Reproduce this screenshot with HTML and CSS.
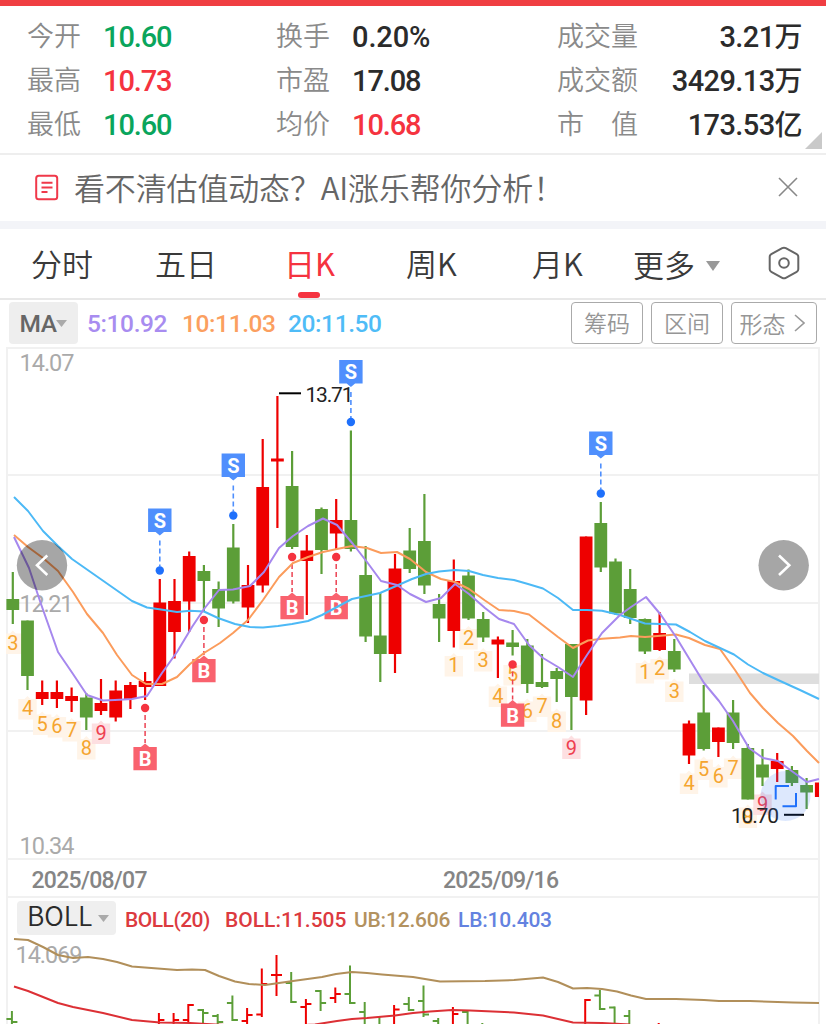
FILE: index.html
```html
<!DOCTYPE html>
<html lang="zh-CN">
<head>
    <meta charset="UTF-8">
    <meta name="viewport" content="width=device-width, initial-scale=1.0">
    <title>日K</title>
    <link rel="stylesheet" href="styles.css">
</head>
<body>
    <div class="top-line"></div>
    <div class="quote">
      <div class="col col-a">
        <div class="row"><span class="label">今开</span><b class="down">10.60</b></div>
        <div class="row"><span class="label">最高</span><b class="up">10.73</b></div>
        <div class="row"><span class="label">最低</span><b class="down">10.60</b></div>
      </div>
      <div class="col col-b">
        <div class="row"><span class="label">换手</span><b class="rate">0.20%</b></div>
        <div class="row"><span class="label">市盈</span><b>17.08</b></div>
        <div class="row"><span class="label">均价</span><b class="up">10.68</b></div>
      </div>
      <div class="col col-c">
        <div class="row"><span class="label">成交量</span><b>3.21<i>万</i></b></div>
        <div class="row"><span class="label">成交额</span><b>3429.13<i>万</i></b></div>
        <div class="row"><span class="label">市　值</span><b>173.53<i>亿</i></b></div>
      </div>
      <div class="corner"></div>
    </div>

    <div class="notice">
      <svg class="doc" width="24" height="27" viewBox="0 0 24 27">
        <rect x="1.2" y="1.7" width="21" height="23.6" rx="2.5"/>
        <path d="M6.5 8.7H17.5M6.5 13.4H17.5M6.5 18H12.5"/>
      </svg>
      <span class="notice-text">看不清估值动态？AI涨乐帮你分析！</span>
      <svg class="close" width="20" height="20" viewBox="0 0 20 20"><path d="M1 1L19 19M19 1L1 19"/></svg>
    </div>

    <div class="tabs">
      <div class="tab">分时</div>
      <div class="tab">五日</div>
      <div class="tab active">日K</div>
      <div class="tab">周K</div>
      <div class="tab">月K</div>
      <div class="tab more">更多<svg width="16" height="12" viewBox="0 0 16 12"><path d="M1 1H15L8 11Z"/></svg></div>
      <svg class="setting" width="32" height="34" viewBox="0 0 32 34">
        <path d="M14.2 2.2Q16 1.2 17.8 2.2L28.7 8.1Q30.3 9 30.3 10.8V23.2Q30.3 25 28.7 25.9L17.8 31.8Q16 32.8 14.2 31.8L3.3 25.9Q1.7 25 1.7 23.2V10.8Q1.7 9 3.3 8.1Z"/>
        <circle cx="16" cy="17" r="4.8"/>
      </svg>
    </div>

    <div class="ma-bar">
      <div class="pick">MA<svg width="11" height="7" viewBox="0 0 11 7"><path d="M0 0H11L5.5 7Z"/></svg></div>
      <span class="ma ma5">5:10.92</span>
      <span class="ma ma10">10:11.03</span>
      <span class="ma ma20">20:11.50</span>
      <div class="btns">
        <div class="btn">筹码</div>
        <div class="btn">区间</div>
        <div class="btn wide">形态<svg width="11" height="18" viewBox="0 0 11 18"><path d="M1 1L10 9L1 17"/></svg></div>
      </div>
    </div>

    <svg class="chart" id="kline" width="826" height="551" viewBox="0 347 826 551"></svg>

    <div class="boll-bar">
      <div class="pick-boll">BOLL<svg width="11" height="7" viewBox="0 0 11 7"><path d="M0 0H11L5.5 7Z"/></svg></div>
      <span class="bl b1">BOLL(20)</span>
      <span class="bl b2">BOLL:11.505</span>
      <span class="bl b3">UB:12.606</span>
      <span class="bl b4">LB:10.403</span>
    </div>

    <svg class="chart" id="boll" width="826" height="89" viewBox="0 935 826 89"></svg>

    <script src="chart.js"></script>
</body>
</html>
```
FILE: styles.css
```css
* {
  box-sizing: border-box;
}

body {
  margin: 0;
  width: 826px;
  height: 1024px;
  overflow: hidden;
  background-color: #fff;
  color: #2b2b2b;
  font-family: Roboto, "Noto Sans CJK SC", sans-serif;
}

svg {
  display: block;
  fill: none;
}

.top-line {
  height: 6px;
  background-color: #f03e42;
}

/* quote */
.quote {
  position: relative;
  display: flex;
  height: 149px;
  padding: 8px 24px 0 27px;
  border-bottom: 2px solid #eee;
}

.col-a { width: 249px; }
.col-b { width: 281px; }
.col-c { width: 245px; }

.row {
  display: flex;
  height: 44px;
  align-items: center;
}

.label {
  width: 76px;
  font-family: "Noto Sans CJK SC", sans-serif;
  font-size: 27px;
  font-weight: 350;
  line-height: 42px;
  padding-bottom: 2px;
  color: #8a8a8a;
  white-space: nowrap;
}

.row b {
  font-size: 29px;
  font-weight: 500;
  line-height: 44px;
  letter-spacing: -1.1px;
  padding-top: 2px;
}

.row .rate {
  letter-spacing: -0.1px;
}

.row i {
  font-family: "Noto Sans CJK SC", sans-serif;
  font-style: normal;
  font-size: 28px;
  line-height: 1;
}

.col-c .row {
  justify-content: space-between;
}

.col-c .row b {
  letter-spacing: -0.6px;
}

.col-c .label {
  width: auto;
}

.up { color: #f5333f; }
.down { color: #0aa55c; }

.corner {
  position: absolute;
  right: 4px;
  bottom: 4px;
  border-left: 17px solid transparent;
  border-bottom: 17px solid #c9c9c9;
}

/* notice */
.notice {
  display: flex;
  align-items: center;
  height: 66px;
  padding: 0 28px 2px 35px;
}

.doc {
  stroke: #f0394a;
  stroke-width: 2;
}

.notice-text {
  flex: 1;
  margin-left: 15px;
  padding-bottom: 1px;
  font-family: "Noto Sans CJK SC", sans-serif;
  font-size: 31px;
  font-weight: 350;
  letter-spacing: -0.15px;
  color: #666;
}

.close {
  stroke: #888;
  stroke-width: 1.6;
}

/* tabs */
.tabs {
  display: flex;
  position: relative;
  height: 79px;
  border-top: 8px solid #f3f4f8;
  border-bottom: 2px solid #e8e8e8;
  padding-left: 31px;
}

.tab {
  width: 124px;
  height: 69px;
  line-height: 67px;
  font-family: "Noto Sans CJK SC", sans-serif;
  font-size: 31px;
  font-weight: 350;
  color: #3a3a3a;
}

.tab.active {
  position: relative;
  padding-left: 5px;
  color: #f5333f;
  font-weight: 400;
}

.tab.active::after {
  content: "";
  position: absolute;
  left: 19px;
  bottom: 0;
  width: 22px;
  height: 6px;
  border-radius: 3px;
  background-color: #f5333f;
}

.tab:nth-child(4) { padding-left: 3px; }
.tab:nth-child(5) { padding-left: 5px; width: 106px; }

.tab.more {
  display: flex;
  align-items: center;
  width: 135px;
}

.more svg {
  margin-top: 4px;
  margin-left: 10px;
  fill: #999;
}

.setting {
  margin-top: 17px;
  stroke: #666;
  stroke-width: 2;
}

/* ma */
.ma-bar {
  display: flex;
  height: 47px;
  padding: 2px 9px 3px;
}

.pick {
  display: flex;
  align-items: center;
  justify-content: center;
  width: 69px;
  border-radius: 4px;
  background-color: #eee;
  font-size: 24.5px;
  font-weight: 500;
  letter-spacing: -0.5px;
  color: #666;
}

.pick svg, .pick-boll svg {
  fill: #aaa;
}

.ma {
  line-height: 43px;
  font-size: 24.5px;
  font-weight: 500;
  letter-spacing: -0.4px;
}

.ma5 { width: 95px; margin-left: 9px; color: #a88cf0; }
.ma10 { width: 106px; color: #fb9f60; }
.ma20 { color: #4fbcf7; }

.btns {
  display: flex;
  gap: 8px;
  margin-left: auto;
}

.btn {
  width: 72px;
  border: 1.5px solid #aaa;
  border-radius: 4px;
  line-height: 39px;
  text-align: center;
  font-family: "Noto Sans CJK SC", sans-serif;
  font-size: 23px;
  font-weight: 350;
  color: #969696;
}

.btn.wide {
  display: flex;
  align-items: center;
  justify-content: center;
  gap: 8px;
  width: 86px;
  padding-right: 4px;
}

.btn svg {
  stroke: #999;
  stroke-width: 1.6;
}

/* boll */
.boll-bar {
  display: flex;
  align-items: center;
  height: 37px;
  margin-left: 6px;
  width: 814px;
  padding-left: 9px;
  border-left: 2px solid #f1f1f1;
  border-right: 2px solid #f1f1f1;
}

.pick-boll {
  display: flex;
  align-items: center;
  gap: 6px;
  width: 99px;
  height: 34px;
  margin-top: 3px;
  padding: 0 0 6px 10px;
  border-radius: 4px;
  background-color: #efefef;
  font-family: "Noto Sans CJK SC", sans-serif;
  font-size: 26.5px;
  font-weight: 350;
  line-height: 28px;
}

.pick-boll svg {
  margin-top: 7px;
}

.bl {
  margin-top: 6px;
  font-size: 21px;
  font-weight: 500;
  letter-spacing: -0.2px;
  white-space: nowrap;
}

.b1 { width: 100px; margin-left: 9px; letter-spacing: -0.5px; color: #dc3a3f; }
.b2 { width: 129px; letter-spacing: 0; color: #dc3a3f; }
.b3 { width: 104px; color: #b3925f; }
.b4 { color: #6482e0; }

/* charts */
.grid line {
  stroke: #f1f1f1;
  stroke-width: 2;
}

.axis {
  font-size: 23.5px;
  fill: #aaa;
}

.date {
  font-size: 23px;
  font-weight: 500;
  fill: #858585;
}

.price {
  font-size: 21px;
  fill: #222;
}

.mark-text {
  font-size: 20px;
  font-weight: 700;
  fill: #fff;
  text-anchor: middle;
}

.num {
  font-size: 20px;
  text-anchor: middle;
}
```
FILE: chart.js
```js
const RED = '#ee0000';
const GREEN = '#5c9e38';
const STEP = 14.7;

// [color, high, body top, body bottom, low]
const candles = [
  ['g',572,599,610,624],['g',620.5,620.5,676,690],['r',680.5,692,699,705],['r',680.5,692,699,708],
  ['r',687.5,696,701,712],['g',693,697.5,717.5,730],['r',679,703,711,715],['r',680.5,690.5,717.5,721.5],
  ['r',682,685,699,709],['r',672,681,687,700],['r',579,602.5,686,686],['r',579,601,632,658.5],
  ['r',551.5,556,601.5,632],['g',565,571,581,612],['g',581.5,589,608.5,627],['g',524,547.5,601.5,603.5],
  ['r',565,585,607.5,623],['r',439,487,585.5,592.5],['r',396,458.5,461.5,528],['g',451,486,547,549],
  ['r',535,550.5,561,615],['g',507.5,509,550,574],['r',499,520,533.5,549],['g',430.5,520,549,551.5],
  ['g',546,575,636.5,642],['g',593,635.5,654,682],['r',554,568.5,654,673],['g',528,550.5,569,573],
  ['g',494,541,585.5,594],['g',594,604,618.5,642],['r',559.5,581,631,647.5],['g',569.5,575.5,618.5,620],
  ['g',612,619,637.5,642],['r',636.5,639.5,644.5,678],['g',630,642.5,647,655.5],['g',639,645.5,684,693],
  ['g',654,682,687,688],['g',668,671,679,702],['g',644,644,697,730],['r',536.5,536.5,700.5,715],
  ['g',502,523,567.5,572],['g',558.5,561.5,613.5,615],['g',569,589,618,624],['g',618.5,619,651.5,654],
  ['r',612,633,650,651],['g',639,651,669.5,672],['r',720.5,723.5,755.5,764],['g',685,712.5,749,750.5],
  ['r',727.5,727.5,742,757],['g',700,712.5,743,749],['g',744,748,799.5,799.5],['g',749,764.5,777.5,786],
  ['r',753,761,769,782],['g',766,770,783,786],['g',778,785,792.5,809],['r',782.5,782.5,797,797]
];

const ma20 = '14,497 28,511 43,531 58,546 72,559 132,601 147,607.5 161,609.5 177,612 190,610.7 204,611.5 218,618 235,624 250,627 263,627.5 278,626 292,624 308,621 322,615 337,607 352,599 380,593 395,586.5 412,579 426,574 439,571.5 455,570 469,571 483,575 498,578 514,580 528,584 543,588.5 558,598 573,610 587,610 602,610.7 620,615 645,623.5 676,624.5 690,632 705,641 720,648 734,654.5 748,664.5 763,673 778,680 800,690 819,699';
const ma10 = '14,535 28,547 43,558 58,571 73,592 87,614 103,633 117,655 132,675 146,684 162,684 177,677 190,664 204,653 220,643 233,633 248,620 263,600 279,577 293,563 308,557 323,552 337,549 352,546 367,548 381,553 397,552 410,559 426,572 441,579 455,582 469,589 485,600.5 499,610 514,611 529,614.5 558,637 573,648 588,640.5 602,638.7 620,637.5 631,636 645,637 676,634.5 689,638 705,645 720,649 735,670 750,693 763,708 778,723 793,736 807,751 819,763';
const ma5 = '14,537 29,568 41,604 58,652 73,674 87,695 103,700.5 115,700 132,699 147,696 162,673 177,652 192,627 204,609 219,590 233,589.5 250,586 264,572 279,548 293,536 308,526 323,518.5 337,525 353,544 367,562 381,581 397,585 410,594 426,602 441,598 455,584 469,594 485,608 499,619 514,624 529,645 543,658 558,667 573,677 587,655 602,633 620,615 631,607 646,597 661,615 676,637 690,660 704,683 719,701 733,721 749,748 763,758 778,761 793,772 807,782 819,779';

// [number, candle index, baseline]
const counts = [
  [3,0,649.5],[4,1,715],[5,2,730.5],[6,3,733],[7,4,737],[8,5,755],[9,6,739.5],
  [1,30,672],[2,31,645],[3,32,667],[4,33,702.5],[5,34,681],[6,35,717.5],[7,36,712.5],[8,37,727.5],[9,38,754.5],
  [1,43,679],[2,44,675],[3,45,697.5],[4,46,789.5],[5,47,775.5],[6,48,783],[7,49,774.5],[8,50,823.5],[9,51,810.5]
];

// [candle index, dot y]
const sells = [[10,570.5],[15,515.5],[23,422],[40,493.5]];
const buys = [[9,708],[13,620],[19,557],[22,557],[34,664.5]];

function cx(i) {
  return 12.8 + STEP * i;
}

function line(x1, y1, x2, y2, color, w) {
  return `<line x1="${x1}" y1="${y1}" x2="${x2}" y2="${y2}" stroke="${color}" stroke-width="${w}"/>`;
}

function poly(points, color, w) {
  return `<polyline points="${points}" stroke="${color}" stroke-width="${w}" stroke-linejoin="round"/>`;
}

function text(cls, x, y, len, str) {
  return `<text class="${cls}" x="${x}" y="${y}" textLength="${len}">${str}</text>`;
}

function drawKline() {
  let s = '<clipPath id="c"><rect x="6" y="347" width="813" height="551"/></clipPath><g class="grid">';
  for (const y of [348, 475, 603, 731, 859, 897]) {
    s += `<line x1="6" y1="${y}" x2="820" y2="${y}"/>`;
  }
  s += '<line x1="7" y1="347" x2="7" y2="898"/><line x1="819" y1="347" x2="819" y2="898"/></g>';
  s += '<rect x="689" y="673.5" width="130" height="10.5" fill="#dedede"/>';
  s += text('axis', 19.5, 371, 55, '14.07') + text('axis', 19.5, 612, 54, '12.21') + text('axis', 19.5, 854, 55, '10.34');
  s += text('date', 31.5, 887.5, 116, '2025/08/07') + text('date', 443, 887.5, 116, '2025/09/16');

  s += '<g clip-path="url(#c)">';
  counts.forEach(([n, i, b]) => {
    const x = cx(i);
    const nine = n === 9;
    s += `<path d="M${x - 9.2} ${b - 16}H${x - 3}L${x} ${b - 19}L${x + 3} ${b - 16}H${x + 9.2}V${b + 4.5}H${x - 9.2}Z" fill="${nine ? '#fddfe1' : '#fff4e8'}"/>`;
    s += `<text class="num" x="${x}" y="${b}" fill="${nine ? '#ee4050' : '#f5a52f'}">${n}</text>`;
  });
  candles.forEach(([c, h, t, b, l], i) => {
    const color = c === 'r' ? RED : GREEN;
    const x = cx(i);
    s += line(x, h, x, l, color, 2.2);
    s += `<rect x="${x - 6.4}" y="${t}" width="12.8" height="${b - t}" fill="${color}"/>`;
  });
  s += '</g>';

  s += line(279, 393.3, 301, 393.3, '#000', 2) + text('price', 305.5, 401.5, 48, '13.71');
  s += line(784, 814.8, 804, 814.8, '#000', 2) + text('price', 731, 822.8, 48, '10.70');

  sells.forEach(([i, y]) => {
    const x = cx(i);
    s += `<path d="M${x - 11.7} ${y - 62}h23.4v23.5h-7.5l-4.2 3.5l-4.2 -3.5h-7.5z" fill="#4f8ffd"/>`;
    s += `<text class="mark-text" x="${x}" y="${y - 43}">S</text>`;
    s += `<line x1="${x}" y1="${y - 30}" x2="${x}" y2="${y - 4}" stroke="#4f8ffd" stroke-width="1.6" stroke-dasharray="5 3"/>`;
    s += `<circle cx="${x}" cy="${y}" r="4.2" fill="#1f70fb"/>`;
  });
  buys.forEach(([i, y]) => {
    const x = cx(i);
    s += `<line x1="${x}" y1="${y + 7}" x2="${x}" y2="${y + 35}" stroke="#ec4353" stroke-width="1.5" stroke-dasharray="5 3"/>`;
    s += `<path d="M${x - 11.7} ${y + 39}h7.5l4.2 -3.5l4.2 3.5h7.5v23.3h-23.4z" fill="#f95a66" fill-opacity="0.95"/>`;
    s += `<text class="mark-text" x="${x}" y="${y + 58}">B</text>`;
    s += `<circle cx="${x}" cy="${y}" r="4.2" fill="#f5333f"/>`;
  });

  s += poly(ma10, '#fb9c5c', 2) + poly(ma20, '#4cb9f6', 2) + poly(ma5, '#a688ee', 2);

  s += '<circle cx="785.5" cy="796" r="25" fill="#2b70f5" fill-opacity="0.16"/>';
  s += poly('789,786 775.7,786 775.7,799.5', '#1f70fb', 2) + poly('796,793 796,806.3 782.5,806.3', '#1f70fb', 2);

  s += '<circle cx="42" cy="565.3" r="25.2" fill="#000" fill-opacity="0.35"/>';
  s += '<path d="M47.3 555.5L37 565.3L47.3 575" stroke="#fff" stroke-width="2.6"/>';
  s += '<circle cx="783.7" cy="565.3" r="25.2" fill="#000" fill-opacity="0.35"/>';
  s += '<path d="M779 555.5L789.3 565.3L779 575" stroke="#fff" stroke-width="2.6"/>';
  document.getElementById('kline').innerHTML = s;
}

// [candle index, color, high, low, open, close], 0 where the tick is out of view
const bars = [
  [0,'g',1011,1030,1019,1022],[10,'r',1013,1030,0,1020],[11,'r',1013,1030,0,1020],[12,'r',1004,1022,1020,1005],
  [13,'g',1009,1030,1010,1013],[14,'g',1014,1030,1016,1022],[15,'g',995.5,1021,1003,1020],[16,'r',1008,1030,1021,1015],
  [17,'r',968.5,1017,1014.5,984],[18,'r',955,996,975,975],[19,'g',972,1003,983,1002],[20,'r',999,1030,1007,1004],
  [21,'g',990,1011,991,1003],[22,'r',987.5,1003,998,994],[23,'g',965.5,1004,994,1003],[24,'g',1002,1030,1012,0],
  [25,'g',1017,1030,0,0],[26,'r',1005,1030,0,1009.5],[27,'g',997,1011,1004,1010],[28,'g',985.5,1017,1001,1014.5],
  [29,'g',1018,1030,1021,0],[30,'r',1007,1030,0,1014],[31,'g',1011,1030,1012,0],[32,'g',1023,1030,0,0],
  [39,'r',999,1030,0,1000],[40,'g',990,1010,995.5,1009],[41,'g',1006.5,1030,1007.5,0],[42,'g',1010,1030,1016,0],
  [44,'r',1023,1030,0,0]
];
const ub = '14,939 28,940 43,947 58,955 73,958 88,957 103,959 117,962 132,966.5 177,970 192,969.5 205,970 219,976 235,981.5 249,984 265,985 279,983 293,981 322,977 336,974 352,972 367,973 382,974.5 413,977 440,981.5 485,981 514,980 543,977.5 558,982 573,988.5 587,988 602,989 617,991.5 631,995.5 646,999 676,999 704,1000 719,1001 750,1001 793,1002.5 819,1003';
const mid = '14,986.5 28,991 43,997 58,1003 73,1007 103,1013 132,1020 160,1022.5 190,1023 215,1024.5 265,1027 315,1024.5 337,1021 352,1019 367,1018 395,1015.5 413,1013 430,1011.5 452,1010 470,1010.5 514,1012.5 543,1015.5 573,1022.5 602,1023 630,1024.5';

function drawBoll() {
  let s = '<g class="grid"><line x1="7" y1="935" x2="7" y2="1024"/><line x1="819" y1="935" x2="819" y2="1024"/></g>';
  s += text('axis', 15.5, 963, 67, '14.069');
  bars.forEach(([i, c, h, l, o, cl]) => {
    const color = c === 'r' ? RED : GREEN;
    const x = 11.9 + STEP * i;
    s += line(x, h, x, l, color, 2);
    if (o) s += line(x - 5.5, o, x, o, color, 2);
    if (cl) s += line(x, cl, x + 5.5, cl, color, 2);
  });
  s += poly(ub, '#b18f5a', 2) + poly(mid, '#dc3035', 2);
  document.getElementById('boll').innerHTML = s;
}

drawKline();
drawBoll();
```
